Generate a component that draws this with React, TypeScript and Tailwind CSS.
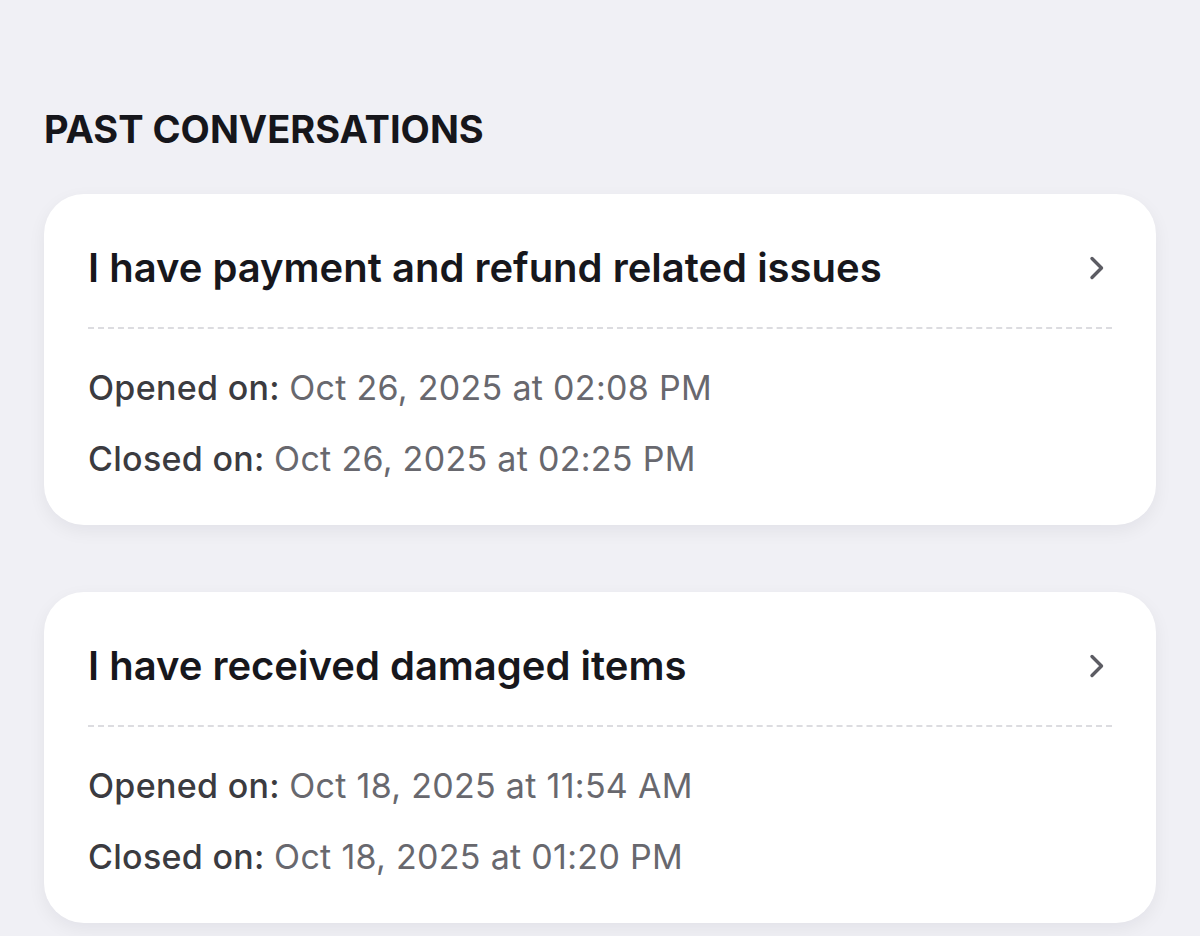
const conversations = [
  {
    id: 1,
    title: "I have payment and refund related issues",
    opened: "Oct 26, 2025 at 02:08 PM",
    closed: "Oct 26, 2025 at 02:25 PM",
  },
  {
    id: 2,
    title: "I have received damaged items",
    opened: "Oct 18, 2025 at 11:54 AM",
    closed: "Oct 18, 2025 at 01:20 PM",
  },
];

function Chevron() {
  return (
    <svg width="18" height="26" viewBox="0 0 18 26" fill="none" className="mr-[6px] shrink-0">
      <path
        d="M4 3.5 L13.5 13 L4 22.5"
        stroke="#5c5c63"
        strokeWidth="3.4"
        strokeLinecap="round"
        strokeLinejoin="round"
      />
    </svg>
  );
}

function ConversationCard({ item }) {
  return (
    <li className="rounded-[40px] bg-white px-[44px] pt-[50px] pb-[46px] shadow-[0_6px_18px_rgba(20,20,40,0.06)]">
      <div className="flex items-center justify-between">
        <p className="text-[40px] leading-[48px] font-semibold text-[#17171c]">
          {item.title}
        </p>
        <Chevron />
      </div>
      <div className="mt-[35px] border-t-2 border-dashed border-[#dcdce0]" />
      <div className="mt-[39px] flex flex-col gap-[31px] text-[34px] leading-[40px] tracking-[0.3px]">
        <p>
          <span className="font-medium text-[#3b3b40]">Opened on: </span>
          <span className="text-[#68686e]">{item.opened}</span>
        </p>
        <p>
          <span className="font-medium text-[#3b3b40]">Closed on: </span>
          <span className="text-[#68686e]">{item.closed}</span>
        </p>
      </div>
    </li>
  );
}

export default function App() {
  return (
    <div
      className="min-h-screen bg-[#f0f0f5] px-[44px] pt-[105px]"
      style={{ fontFamily: "Inter, 'Noto Sans', sans-serif" }}
    >
      <h2 className="text-[38px] leading-[48px] font-bold text-[#16161b]">
        PAST CONVERSATIONS
      </h2>
      <ul className="mt-[41px] flex flex-col gap-[67px]">
        {conversations.map((c) => (
          <ConversationCard key={c.id} item={c} />
        ))}
      </ul>
    </div>
  );
}
